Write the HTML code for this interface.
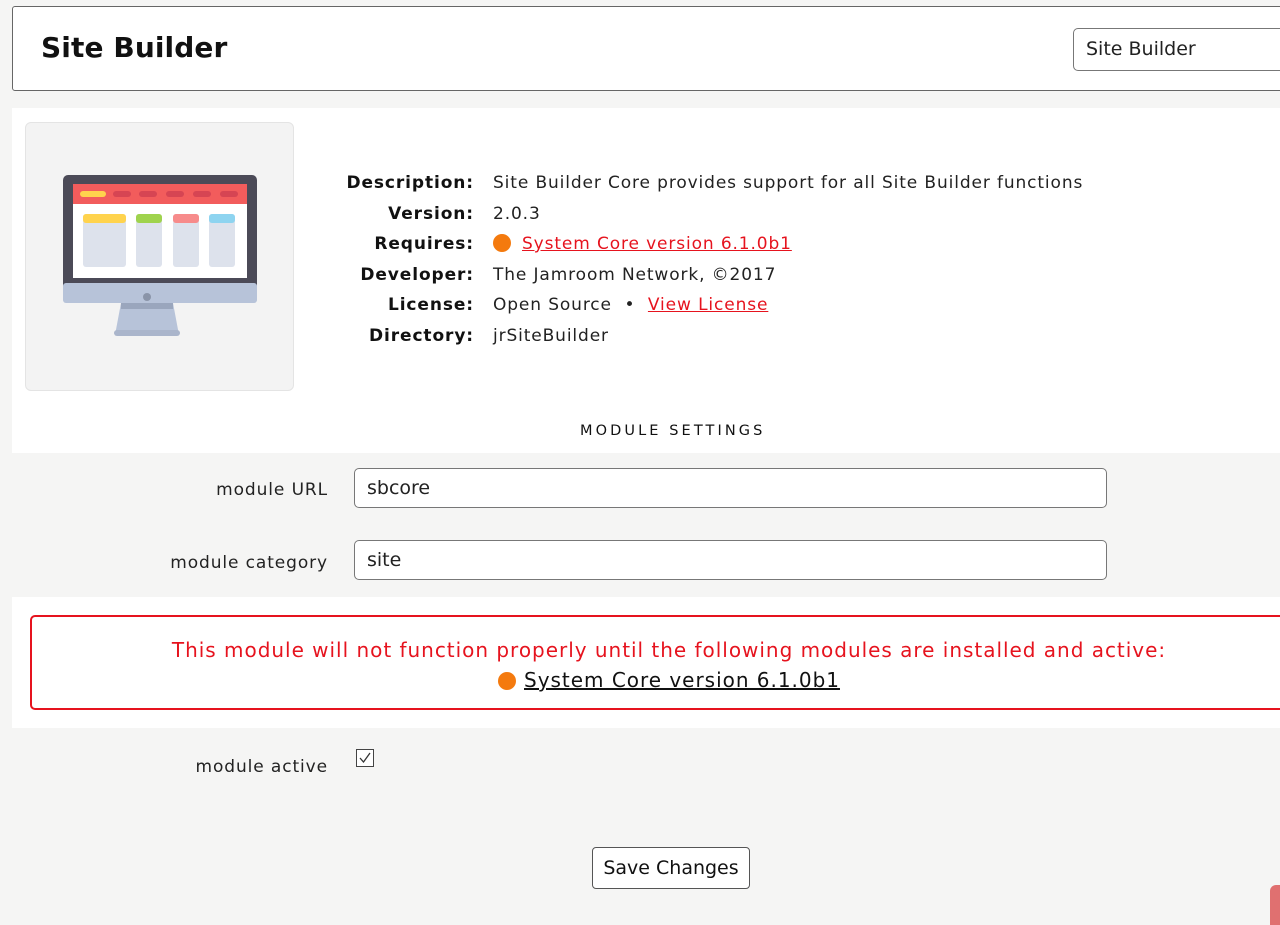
<!DOCTYPE html>
<html><head><meta charset="utf-8"><style>
*{box-sizing:border-box;margin:0;padding:0}
body{width:1280px;height:925px;overflow:hidden;background:#f5f5f4;font-family:"DejaVu Sans","Liberation Sans",sans-serif;color:#222;position:relative}
.hdr{position:absolute;left:12px;top:6px;width:1290px;height:85px;background:#fff;border:1px solid #666;border-radius:3px}
.hdr h1{position:absolute;left:28px;top:24px;font-size:28px;font-weight:bold;color:#111;letter-spacing:0.1px}
.sel{position:absolute;left:1060px;top:21px;width:240px;height:43px;border:1px solid #777;border-radius:5px;font-size:19px;padding:9px 0 0 12px;color:#222}
.panel{position:absolute;left:12px;top:108px;width:1268px;height:345px;background:#fff}
.img{position:absolute;left:13px;top:14px;width:269px;height:269px;background:#f3f3f3;border:1px solid #e4e4e4;border-radius:6px}
.info{position:absolute;top:168px;font-size:17px;line-height:30.5px}
.lbl{left:280px;width:194px;text-align:right;font-weight:bold;color:#111;letter-spacing:0.9px}
.val{left:493px;color:#222;white-space:nowrap;letter-spacing:0.88px}
.red{color:#e6131e;text-decoration:underline}
.dot{display:inline-block;width:18px;height:18px;border-radius:50%;background:#f47a0e;vertical-align:-3px;margin-right:11px}
.ms{position:absolute;left:580px;top:423px;font-size:14.5px;letter-spacing:3.1px;color:#111}
.flab{position:absolute;width:316px;text-align:right;font-size:17px;color:#222;letter-spacing:0.9px}
.inp{position:absolute;left:354px;width:753px;height:40px;background:#fff;border:1px solid #777;border-radius:5px;font-size:19px;padding:8px 0 0 12px}
.wpan{position:absolute;left:12px;top:597px;width:1268px;height:131px;background:#fff}
.warn{position:absolute;left:18px;top:18px;width:1270px;height:95px;border:2px solid #e6131e;border-radius:5px;text-align:center;color:#e6131e;font-size:20px;letter-spacing:0.98px;padding-top:18px;line-height:30px;padding-left:8px}
.warn a{color:#111;text-decoration:underline}
.cb{position:absolute;left:356px;top:749px;width:18px;height:18px;border:1px solid #444;background:#fff}
.btn{position:absolute;left:592px;top:847px;width:158px;height:42px;border:1px solid #555;border-radius:4px;background:#fff;font-size:19px;text-align:center;padding-top:9px;color:#111}
</style></head><body>
<div class="hdr"><h1>Site Builder</h1><div class="sel">Site Builder</div></div>
<div class="panel">
 <div class="img">
  <svg width="269" height="269" viewBox="0 0 269 269"><g transform="translate(-13,0)">
   <rect x="50" y="52" width="194" height="115" rx="5" fill="#4b4a57"/>
   <rect x="50" y="160" width="194" height="20" rx="3" fill="#b7c3d9"/>
   <rect x="60" y="61" width="174" height="94" fill="#fff"/>
   <rect x="60" y="61" width="174" height="20" fill="#f25c5c"/>
   <rect x="67" y="68" width="26" height="6" rx="3" fill="#ffd34d"/>
   <rect x="100" y="68" width="18" height="6" rx="3" fill="#d64553"/>
   <rect x="126" y="68" width="18" height="6" rx="3" fill="#d64553"/>
   <rect x="153" y="68" width="18" height="6" rx="3" fill="#d64553"/>
   <rect x="180" y="68" width="18" height="6" rx="3" fill="#d64553"/>
   <rect x="207" y="68" width="18" height="6" rx="3" fill="#d64553"/>
   <rect x="70" y="91" width="43" height="53" rx="3" fill="#dde2ec"/>
   <rect x="70" y="91" width="43" height="9" rx="3" fill="#ffd34d"/>
   <rect x="123" y="91" width="26" height="53" rx="3" fill="#dde2ec"/>
   <rect x="123" y="91" width="26" height="9" rx="3" fill="#9fd34d"/>
   <rect x="160" y="91" width="26" height="53" rx="3" fill="#dde2ec"/>
   <rect x="160" y="91" width="26" height="9" rx="3" fill="#f78b8b"/>
   <rect x="196" y="91" width="26" height="53" rx="3" fill="#dde2ec"/>
   <rect x="196" y="91" width="26" height="9" rx="3" fill="#8ed4f0"/>
   <circle cx="134" cy="174" r="4" fill="#8a94a8"/>
   <path d="M108 180 H160 L166 212 H102 Z" fill="#b7c3d9"/>
   <rect x="108" y="180" width="52" height="6" fill="#9aa6bd"/>
   <rect x="101" y="207" width="66" height="6" rx="3" fill="#aab5cb"/>
  </g></svg>
 </div>
</div>
<div class="info lbl">Description:<br>Version:<br>Requires:<br>Developer:<br>License:<br>Directory:</div>
<div class="info val">Site Builder Core provides support for all Site Builder functions<br>2.0.3<br><span class="dot"></span><span class="red">System Core version 6.1.0b1</span><br>The Jamroom Network, ©2017<br>Open Source &nbsp;•&nbsp; <span class="red">View License</span><br>jrSiteBuilder</div>
<div class="ms">MODULE SETTINGS</div>
<div class="flab" style="left:12px;top:480px">module URL</div>
<div class="inp" style="top:468px">sbcore</div>
<div class="flab" style="left:12px;top:553px">module category</div>
<div class="inp" style="top:540px">site</div>
<div class="wpan"><div class="warn">This module will not function properly until the following modules are installed and active:<br><span class="dot" style="margin-right:8px"></span><a>System Core version 6.1.0b1</a></div></div>
<div class="flab" style="left:12px;top:757px">module active</div>
<div class="cb"><svg width="16" height="16" viewBox="0 0 16 16"><path d="M3 8 L6.5 12 L13 3" fill="none" stroke="#333" stroke-width="1.3"/></svg></div>
<div class="btn">Save Changes</div>
<div style="position:absolute;left:1270px;top:885px;width:12px;height:40px;background:#e07070;border-radius:6px 0 0 0"></div>
</body></html>
